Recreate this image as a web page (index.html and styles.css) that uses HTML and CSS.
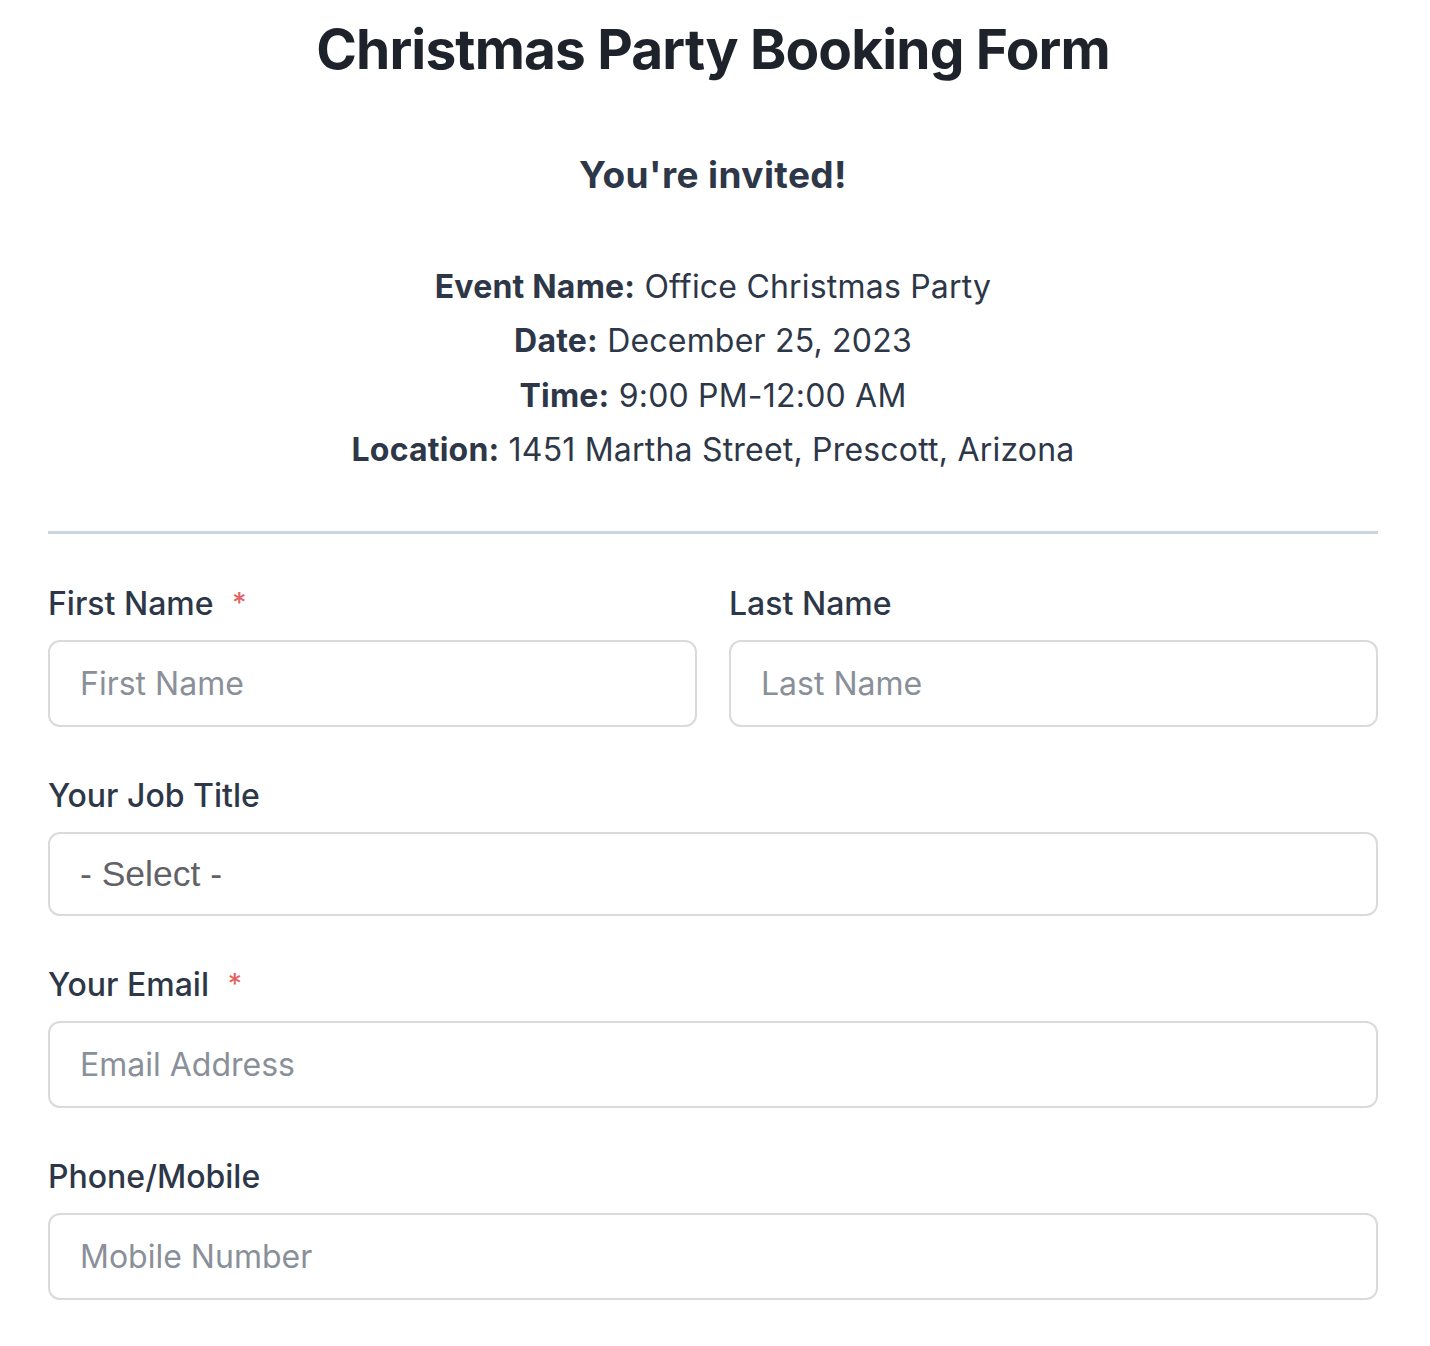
FILE: index.html
```html
<!DOCTYPE html>
<html lang="en">
<head>
<meta charset="utf-8">
<title>Christmas Party Booking Form</title>
<link rel="stylesheet" href="styles.css">
</head>
<body>
<main class="page">
  <h1 class="title">Christmas Party Booking Form</h1>
  <h2 class="subtitle">You're invited!</h2>
  <div class="details">
    <p><strong>Event Name:</strong> Office Christmas Party</p>
    <p><strong>Date:</strong> December 25, 2023</p>
    <p><strong>Time:</strong> 9:00 PM-12:00 AM</p>
    <p><strong>Location:</strong> 1451 Martha Street, Prescott, Arizona</p>
  </div>
  <hr class="divider">
  <form class="form">
    <div class="row">
      <div class="field">
        <label class="label" for="fn">First Name <span class="req">*</span></label>
        <input class="input" id="fn" type="text" placeholder="First Name">
      </div>
      <div class="field">
        <label class="label" for="ln">Last Name</label>
        <input class="input" id="ln" type="text" placeholder="Last Name">
      </div>
    </div>
    <div class="field">
      <label class="label" for="job">Your Job Title</label>
      <select class="select" id="job">
        <option>- Select -</option>
      </select>
    </div>
    <div class="field">
      <label class="label" for="em">Your Email <span class="req">*</span></label>
      <input class="input" id="em" type="email" placeholder="Email Address">
    </div>
    <div class="field">
      <label class="label" for="ph">Phone/Mobile</label>
      <input class="input" id="ph" type="tel" placeholder="Mobile Number">
    </div>
  </form>
</main>
</body>
</html>
```
FILE: styles.css
```css
* { box-sizing: border-box; }
html, body { margin: 0; padding: 0; background: #ffffff; }
body {
  font-family: Inter, "Noto Sans", sans-serif;
  color: #2d3748;
}
.page {
  width: 1330px;
  margin-left: 48px;
}
.title {
  margin: 16px 0 0;
  font-size: 55px;
  line-height: 66px;
  font-weight: 700;
  color: #1e222b;
  text-align: center;
  letter-spacing: -0.85px;
}
.subtitle {
  margin: 71px 0 0;
  font-size: 37px;
  line-height: 44px;
  font-weight: 700;
  color: #2d3748;
  text-align: center;
  letter-spacing: 0.4px;
}
.details {
  margin-top: 63px;
  text-align: center;
  font-size: 32px;
  line-height: 54.4px;
  letter-spacing: 0.2px;
}
.details p { margin: 0; }
.details strong { font-weight: 700; }
.divider {
  margin: 53px 0 0;
  border: 0;
  height: 3px;
  background: #cbd5e1;
}
.form {
  margin-top: 46px;
  display: flex;
  flex-direction: column;
  gap: 45px;
}
.row {
  display: grid;
  grid-template-columns: 1fr 1fr;
  column-gap: 32px;
}
.field {
  display: flex;
  flex-direction: column;
  gap: 12px;
}
.label {
  font-size: 32px;
  line-height: 48px;
  font-weight: 500;
  color: #2d3748;
}
.req {
  color: #e36464;
  margin-left: 10px;
  font-size: 28px;
  line-height: 0;
  vertical-align: 2px;
}
.input {
  height: 87px;
  border: 2px solid #dadada;
  border-radius: 12px;
  padding: 0 30px;
  font-family: Inter, "Noto Sans", sans-serif;
  font-size: 32px;
  color: #2d3748;
  background: #fff;
  outline: none;
}
.input::placeholder { color: #8a9099; }
.select {
  height: 84px;
  border: 2px solid #dadada;
  border-radius: 12px;
  padding: 0 30px;
  font-family: "Liberation Sans", Arial, sans-serif;
  font-size: 35.5px;
  color: #626267;
  background: #fff;
  -webkit-appearance: none;
  appearance: none;
  outline: none;
}
```
